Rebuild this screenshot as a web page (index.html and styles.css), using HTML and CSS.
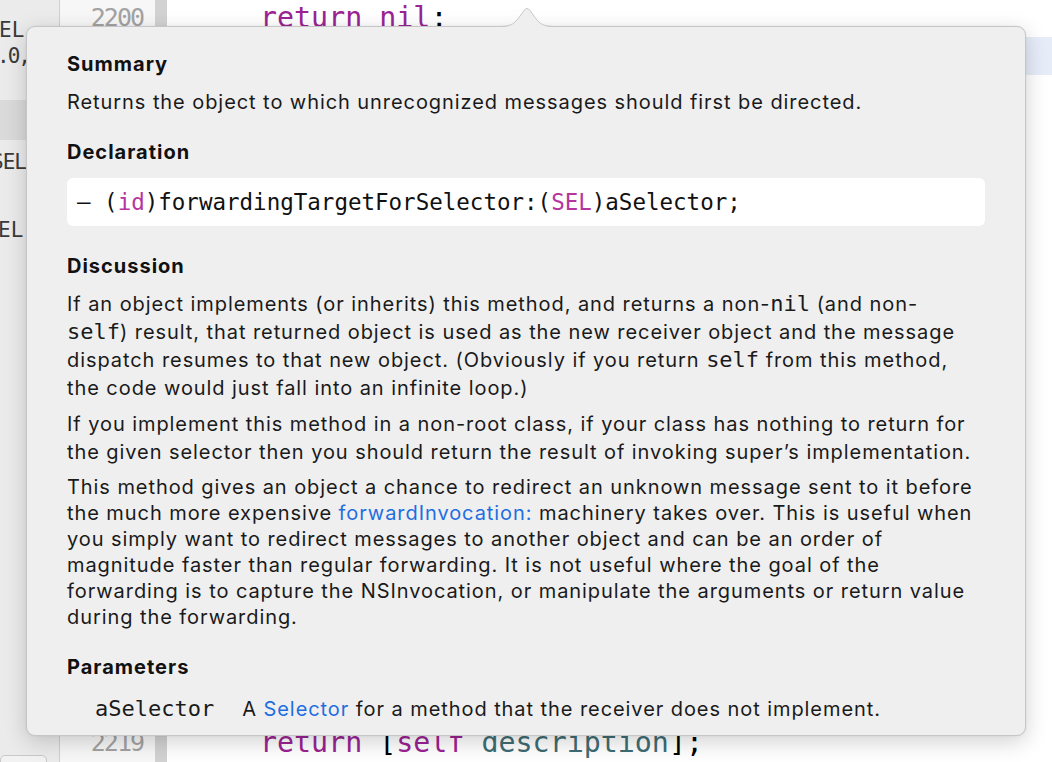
FILE: index.html
```html
<!DOCTYPE html>
<html>
<head>
<meta charset="utf-8">
<link rel="stylesheet" href="styles.css">
</head>
<body>
<div class="editor">
  <div class="side">
    <div class="side-line l1">EL</div>
    <div class="side-line l2">.0,</div>
    <div class="side-band"></div>
    <div class="side-line l3">SEL</div>
    <div class="side-line l4">EL</div>
    <div class="side-box"></div>
  </div>
  <div class="gutter">
    <div class="num">2200</div>
    <div class="num-fill"></div>
    <div class="num">2219</div>
  </div>
  <div class="bar"></div>
  <div class="code">
    <div class="cl"><span class="kw">return</span> <span class="kw">nil</span>;</div>
    <div class="cl current"></div>
    <div class="code-fill"></div>
    <div class="cl"><span class="kw">return</span> [<span class="kw">self</span> <span class="fn">description</span>];</div>
  </div>
</div>

<div class="popover">
  <svg class="arrow" width="60" height="26" viewBox="0 0 60 26">
    <path d="M0 25 C 12 25, 16 24, 22 16 L 27 9 Q 30 5 33 9 L 38 16 C 44 24, 48 25, 60 25 Z" fill="#efeff0"/>
    <path d="M0 24.5 C 12 24.5, 16 23.5, 22 15.5 L 27 8.5 Q 30 4.5 33 8.5 L 38 15.5 C 44 23.5, 48 24.5, 60 24.5" fill="none" stroke="#c6c6c8" stroke-width="1"/>
  </svg>
  <div class="content">
    <h2 class="h">Summary</h2>
    <p class="summary">Returns the object to which unrecognized messages should first be directed.</p>

    <h2 class="h decl-h">Declaration</h2>
    <div class="decl">– (<span class="kw">id</span>)forwardingTargetForSelector:(<span class="kw">SEL</span>)aSelector;</div>

    <h2 class="h disc-h">Discussion</h2>
    <p class="p p1">If an object implements (or inherits) this method, and returns a non-<code>nil</code> (and non-<code>self</code>) result, that returned object is used as the new receiver object and the message dispatch resumes to that new object. (Obviously if you return <code>self</code> from this method, the code would just fall into an infinite loop.)</p>
    <p class="p p2">If you implement this method in a non-root class, if your class has nothing to return for the given selector then you should return the result of invoking super’s implementation.</p>
    <p class="p p3">This method gives an object a chance to redirect an unknown message sent to it before the much more expensive <a class="link">forwardInvocation:</a> machinery takes over. This is useful when you simply want to redirect messages to another object and can be an order of magnitude faster than regular forwarding. It is not useful where the goal of the forwarding is to capture the NSInvocation, or manipulate the arguments or return value during the forwarding.</p>

    <h2 class="h param-h">Parameters</h2>
    <div class="param">
      <code class="pname">aSelector</code>
      <span class="pdesc">A <a class="link">Selector</a> for a method that the receiver does not implement.</span>
    </div>
  </div>
</div>
</body>
</html>
```
FILE: styles.css
```css
* { box-sizing: border-box; }
html, body { margin: 0; padding: 0; }
body {
  width: 1052px;
  height: 762px;
  overflow: hidden;
  position: relative;
  background: #ffffff;
  font-family: Inter, "Noto Sans", sans-serif;
}

.editor {
  display: flex;
  height: 762px;
}

.side {
  width: 60px;
  background: #ebebeb;
  border-right: 1px solid #cfcfcf;
  display: flex;
  flex-direction: column;
  font-family: "DejaVu Sans Mono", monospace;
  font-size: 21px;
  color: #3a3a3a;
  overflow: hidden;
  white-space: nowrap;
}
.side-line {
  height: 26px;
  line-height: 26px;
  margin-left: -1px;
}
.side-line.l1 { margin-top: 17px; }
.side-line.l2 { margin-left: -3px; letter-spacing: -2px; }
.side-band {
  height: 40px;
  margin-top: 31px;
  background: #dadada;
}
.side-line.l3 { margin-top: 9px; margin-left: -9px; letter-spacing: -1px; }
.side-line.l4 { margin-top: 42px; margin-left: -2px; }
.side-box {
  margin-top: auto;
  margin-bottom: -10px;
  height: 17px;
  width: 47px;
  border: 1px solid #c8c8c8;
  border-radius: 5px;
  background: #f2f2f2;
}

.gutter {
  width: 95px;
  background: #f7f7f7;
  display: flex;
  flex-direction: column;
  align-items: flex-end;
  padding-right: 12px;
  font-family: "DejaVu Sans Mono", monospace;
  font-size: 25px;
  color: #a3a3a3;
  letter-spacing: -2px;
}
.num { height: 38px; line-height: 38px; }
.gutter .num:first-child { margin-top: -1px; }
.num-fill { flex: 1; }

.bar {
  width: 12px;
  background: #d2d2d2;
}

.code {
  flex: 1;
  display: flex;
  flex-direction: column;
  padding-left: 93px;
  font-family: "DejaVu Sans Mono", monospace;
  font-size: 28.3px;
  color: #000;
  white-space: pre;
}
.cl { height: 38px; line-height: 38px; }
.code .cl:first-child { margin-top: -1px; }
.cl.current { background: #e6ecf8; margin-left: -93px; }
.code-fill { flex: 1; }
.code .kw { color: #9b2393; }
.code .fn { color: #3e6d74; }

.popover {
  position: absolute;
  left: 26px;
  top: 26px;
  width: 1000px;
  height: 710px;
  background: #efeff0;
  border: 1px solid #c6c6c8;
  border-radius: 9px;
  box-shadow: 0 6px 22px rgba(0,0,0,0.18), 0 0 2px rgba(0,0,0,0.08);
}
.arrow {
  position: absolute;
  left: 470px;
  top: -25px;
}

.content {
  padding: 24px 49px 0 40px;
  font-size: 20px;
  line-height: 26px;
  letter-spacing: 0.93px;
  color: #1a1a1a;
}
.h {
  margin: 0;
  font-size: 20px;
  line-height: 26px;
  font-weight: 700;
  letter-spacing: 1px;
  color: #111;
}
p { margin: 0; }
.summary { margin-top: 12px; }
.decl-h { margin-top: 24px; }
.decl {
  margin-top: 13px;
  margin-right: -9px;
  height: 48px;
  background: #ffffff;
  border-radius: 6px;
  padding-left: 10px;
  display: flex;
  align-items: center;
  font-family: "DejaVu Sans Mono", monospace;
  font-size: 22.5px;
  letter-spacing: 0;
  color: #111;
  white-space: pre;
}
.decl .kw { color: #b5359f; }
.disc-h { margin-top: 27px; }
.p1 { margin-top: 11px; line-height: 28px; }
.p2 { margin-top: 8px; line-height: 28px; }
.p3 { margin-top: 8px; line-height: 26px; }
code {
  font-family: "DejaVu Sans Mono", monospace;
  font-size: 22px;
  line-height: 1;
  letter-spacing: 0;
}
.link { color: #1f6ee0; text-decoration: none; }
.param-h { margin-top: 24px; }
.param {
  margin-top: 16px;
  display: flex;
  gap: 28px;
  padding-left: 28px;
  align-items: baseline;
}
.pname { font-size: 22px; }
```
